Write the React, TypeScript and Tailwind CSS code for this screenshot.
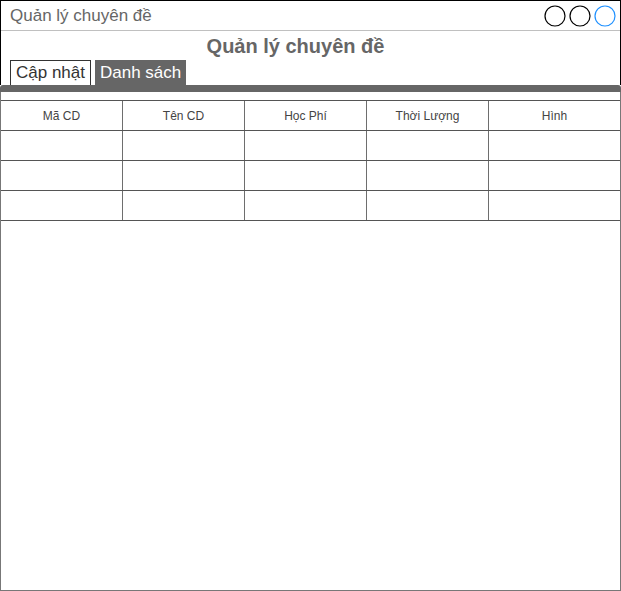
const columns = [
  { label: "Mã CD", width: "w-[122px]" },
  { label: "Tên CD", width: "w-[122px]" },
  { label: "Học Phí", width: "w-[122px]" },
  { label: "Thời Lượng", width: "w-[122px]" },
  { label: "Hình", width: "flex-1" },
]

function Circle({ blue }: { blue?: boolean }) {
  return (
    <svg width="22" height="22" viewBox="0 0 22 22">
      <circle
        cx="11"
        cy="11"
        r="10"
        fill="none"
        stroke={blue ? "#1e90ff" : "#000"}
        strokeWidth="1.2"
      />
    </svg>
  )
}

function Row({ header }: { header?: boolean }) {
  return (
    <div className="flex h-[30px] border-b border-[#555]">
      {columns.map((col, i) => (
        <div
          key={col.label}
          className={`${col.width} flex items-center justify-center text-[12px] text-[#444] ${
            i < columns.length - 1 ? "border-r border-[#6e6e6e]" : ""
          }`}
        >
          {header ? col.label : ""}
        </div>
      ))}
    </div>
  )
}

export default function App() {
  return (
    <div className="w-[621px] h-[591px] flex flex-col bg-white font-['Liberation_Sans',Arial,sans-serif]">
      <div className="h-[85px] border-x border-t border-black flex flex-col">
        <div className="h-[30px] flex items-center justify-between border-b border-[#c0c0c0] pl-[9px] pr-[4px]">
          <span className="text-[17px] text-[#666]">Quản lý chuyên đề</span>
          <div className="flex gap-[3px] items-center mt-[1px]">
            <Circle />
            <Circle />
            <Circle blue />
          </div>
        </div>
        <div className="flex justify-center pr-[30px] pt-[3px]">
          <h1 className="text-[20px] font-bold text-[#666] leading-[24px]">
            Quản lý chuyên đề
          </h1>
        </div>
        <div className="flex gap-[4px] pl-[9px] mt-auto">
          <div className="h-[25px] px-[5px] border border-[#333] border-b-0 flex items-center text-[17px] text-[#333]">
            Cập nhật
          </div>
          <div className="h-[25px] px-[5px] bg-[#666] flex items-center text-[17px] text-white">
            Danh sách
          </div>
        </div>
      </div>
      <div className="h-[7px] bg-[#666] rounded-t-[3px]" />
      <div className="flex-1 border-x border-b border-[#777] pt-[8px]">
        <div className="border-t border-[#555]">
          <Row header />
          <Row />
          <Row />
          <Row />
        </div>
      </div>
    </div>
  )
}
